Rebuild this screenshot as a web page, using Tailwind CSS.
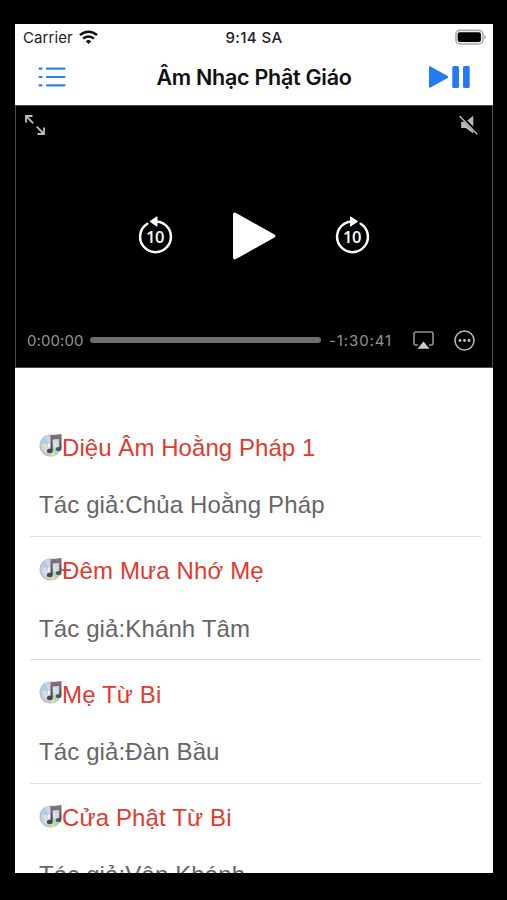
<!DOCTYPE html>
<html lang="vi">
<head>
<meta charset="utf-8">
<title>Âm Nhạc Phật Giáo</title>
<script src="https://cdn.jsdelivr.net/npm/@tailwindcss/browser@4"></script>
</head>
<body class="bg-black w-[507px] h-[900px] overflow-hidden pt-6 pl-[15px] font-['Inter',sans-serif]">
<svg class="absolute w-0 h-0">
  <defs>
    <radialGradient id="discShade"><stop offset="0" stop-color="#eef1f3"/><stop offset=".75" stop-color="#ccd6dc"/><stop offset="1" stop-color="#b2bbc1"/></radialGradient>
    <linearGradient id="noteShade" x1="0" y1="0" x2="0" y2="1"><stop offset="0" stop-color="#8b7583"/><stop offset="1" stop-color="#45414f"/></linearGradient>
    <symbol id="disc" viewBox="0 0 24 24">
      <circle cx="11.5" cy="12.5" r="11" fill="url(#discShade)"/>
      <path d="M11.5 12.5 1.1 9A11 11 0 0 1 5.5 3.3z" fill="#a9cfe6"/>
      <path d="M11.5 12.5 5.5 3.3A11 11 0 0 1 9.5 1.7z" fill="#d5d0ea"/>
      <path d="M11.5 12.5 21.5 17A11 11 0 0 1 16.5 22.3z" fill="#a5d8bd"/>
      <path d="M11.5 12.5 16.5 22.3A11 11 0 0 1 12 23.5z" fill="#dcdc9e"/>
      <circle cx="11" cy="12.5" r="3" fill="#f4f4f6" stroke="#b5bac2" stroke-width=".7"/>
      <path d="M11.5 2.2 22.5 1v14.5h-2.2V5.8l-6.6.8v11h-2.2z" fill="url(#noteShade)"/>
      <ellipse cx="10.8" cy="18" rx="2.9" ry="2.2" fill="#4b4754"/>
      <ellipse cx="19.6" cy="16" rx="2.8" ry="2.1" fill="#5a5260"/>
    </symbol>
  </defs>
</svg>
<main class="w-[478px] h-[849px] bg-white overflow-hidden flex flex-col">
  <div class="h-[26px] shrink-0 grid grid-cols-3 items-center px-2 text-[#222]">
    <div class="flex items-center gap-[6px] text-[15px] tracking-[0.1px] leading-none">
      <span>Carrier</span>
      <svg class="w-[19px] h-[14px] mt-[-1px]" viewBox="0 0 19 14" fill="none" stroke="#111" stroke-width="2.5"><path d="M1 5.2a12.2 12.2 0 0 1 17 0M4.1 8.6a7.8 7.8 0 0 1 10.8 0"/><path d="M9.5 14 6.7 11.3a4 4 0 0 1 5.6 0z" fill="#111" stroke="none"/></svg>
    </div>
    <span class="text-center text-[15px] font-medium leading-none tracking-[0.4px] whitespace-nowrap">9:14 SA</span>
    <svg class="justify-self-end w-[31px] h-[16px] mr-[-1px] mt-[-1px]" viewBox="0 0 31 16"><rect x=".9" y="1.3" width="27" height="13.6" rx="4" fill="#eee" stroke="#aaa" stroke-width="1.5"/><rect x="2.7" y="3.2" width="23.2" height="9.8" rx="2" fill="#000"/><path d="M29.3 6v4.5q1.5-.6 1.5-2.2T29.3 6" fill="#999"/></svg>
  </div>
  <header class="h-[55px] shrink-0 grid grid-cols-[1fr_auto_1fr] items-center px-[23px] pb-[1px]">
    <svg class="w-7 h-5" viewBox="0 0 28 20" stroke="#337ee8" stroke-width="2.2" stroke-linecap="round"><path d="M1.5 1.7h2M9 1.7h17.5M1.5 10h2M9 10h17.5M1.5 18.3h2M9 18.3h17.5"/></svg>
    <h1 class="text-[21.5px] font-semibold tracking-[-0.27px] text-[#111] whitespace-nowrap">Âm Nhạc Phật Giáo</h1>
    <svg class="w-[41px] h-[22px] justify-self-end" viewBox="0 0 41 22" fill="#2479f5"><path d="M0 1.2Q0-.3 1.5.4L18.7 10q1.3 1 0 2L1.5 21.6Q0 22.3 0 20.8z"/><rect x="23.3" width="6.7" height="22" rx="1.5"/><rect x="34" width="6.7" height="22" rx="1.5"/></svg>
  </header>
  <section class="h-[263px] shrink-0 bg-black border border-[#4a4a4a] flex flex-col">
    <div class="flex justify-between pl-[9px] pr-[13px] pt-[9px]">
      <svg class="w-5 h-5" viewBox="0 0 20 20" fill="none" stroke="#bdbdbd" stroke-width="1.8"><path d="M1 7.5V1h6.5M1 1l7.3 7.3M19 12.5V19h-6.5M19 19l-7.3-7.3"/></svg>
      <svg class="w-[20px] h-[20px]" viewBox="0 0 20 20"><path d="M2.2 6.8h4.5L14.3.8v17.6L6.7 13H2.2z" fill="#b8b8b8"/><path d="M.9.1 19 18.6" stroke="#000" stroke-width="3.2"/><path d="M.5 1 18.2 19.3" stroke="#b8b8b8" stroke-width="1.5"/></svg>
    </div>
    <div class="flex items-center pl-[122px] pt-[77px]">
      <svg class="w-[35px] h-[38px] mt-[-3px]" viewBox="0 0 35 38"><path d="M9.3 7.7A15.4 15.4 0 1 0 25.7 7.7" fill="none" stroke="#fff" stroke-width="2.5" stroke-linecap="round"/><path d="M17 5.5a15.5 15.5 0 0 1 8.7 2.2" fill="none" stroke="#fff" stroke-width="2.5"/><path d="M12 5.4 19 .8v9.4z" fill="#fff" stroke="#fff" stroke-linejoin="round"/><text x="17" y="27" text-anchor="middle" font-family="Open Sans" font-size="16.5" font-weight="600" letter-spacing="-.4" fill="#fff">10</text></svg>
      <svg class="w-[43px] h-12 ml-[60px]" viewBox="0 0 43 48" fill="#fff"><path d="M0 3Q0-.8 3.5 1.2L41 22.3q3 1.7 0 3.4L3.5 46.8Q0 48.8 0 45z"/></svg>
      <svg class="w-[35px] h-[38px] ml-[59px] mt-[-3px]" viewBox="0 0 35 38"><path d="M25.7 7.7A15.4 15.4 0 1 1 9.3 7.7" fill="none" stroke="#fff" stroke-width="2.5" stroke-linecap="round"/><path d="M18 5.5a15.5 15.5 0 0 0-8.7 2.2" fill="none" stroke="#fff" stroke-width="2.5"/><path d="M22.5 5.4 15.5.8v9.4z" fill="#fff" stroke="#fff" stroke-linejoin="round"/><text x="17" y="27" text-anchor="middle" font-family="Open Sans" font-size="16.5" font-weight="600" letter-spacing="-.4" fill="#fff">10</text></svg>
    </div>
    <div class="mt-auto h-[54px] flex items-center pl-[11px] text-[15px] leading-none text-[#929292]">
      <span class="w-[63px] tracking-[0.1px]">0:00:00</span>
      <div class="w-[231px] h-[6px] rounded-full bg-[#6e6e6e]"></div>
      <span class="ml-[8px] w-[84px] tracking-[0.9px]">-1:30:41</span>
      <svg class="w-[21px] h-[18px]" viewBox="0 0 21 18"><path d="M5 14H2.7Q1 14 1 12.3V2.7Q1 1 2.7 1h15.6Q20 1 20 2.7v9.6q0 1.7-1.7 1.7H16" fill="none" stroke="#929292" stroke-width="1.6"/><path d="m10.5 10.5 6 7.2h-12z" fill="#ccc"/></svg>
      <svg class="w-[21px] h-[21px] ml-[20px]" viewBox="0 0 21 21"><circle cx="10.5" cy="10.5" r="9.5" fill="none" stroke="#b5b5b5" stroke-width="1.6"/><g fill="#c4c4c4"><circle cx="6" cy="10.5" r="1.4"/><circle cx="10.5" cy="10.5" r="1.4"/><circle cx="15" cy="10.5" r="1.4"/></g></svg>
    </div>
  </section>
  <ul class="pt-[45px] pl-[15px] pr-[12px] font-['Liberation_Sans',Arial,sans-serif] text-[24px] whitespace-nowrap">
    <li class="h-[123.5px] border-b border-[#dedede] pl-[9px] pt-[20px]">
      <div class="h-[29px] flex items-center text-[#e23a2e] tracking-[0.06px]"><svg class="w-6 h-6 mt-[-5px] mr-[-1px]"><use href="#disc"/></svg><span>Diệu Âm Hoằng Pháp 1</span></div>
      <p class="mt-[28px] h-[29px] leading-[29px] tracking-[0.12px] text-[#666]">Tác giả:Chủa Hoằng Pháp</p>
    </li>
    <li class="h-[123.5px] border-b border-[#dedede] pl-[9px] pt-[20px]">
      <div class="h-[29px] flex items-center text-[#e23a2e] tracking-[0.14px]"><svg class="w-6 h-6 mt-[-5px] mr-[-1px]"><use href="#disc"/></svg><span>Đêm Mưa Nhớ Mẹ</span></div>
      <p class="mt-[28px] h-[29px] leading-[29px] tracking-[0.12px] text-[#666]">Tác giả:Khánh Tâm</p>
    </li>
    <li class="h-[123.5px] border-b border-[#dedede] pl-[9px] pt-[20px]">
      <div class="h-[29px] flex items-center text-[#e23a2e] tracking-[0.14px]"><svg class="w-6 h-6 mt-[-5px] mr-[-1px]"><use href="#disc"/></svg><span>Mẹ Từ Bi</span></div>
      <p class="mt-[28px] h-[29px] leading-[29px] tracking-[0.12px] text-[#666]">Tác giả:Đàn Bầu</p>
    </li>
    <li class="h-[123.5px] pl-[9px] pt-[20px]">
      <div class="h-[29px] flex items-center text-[#e23a2e] tracking-[0.14px]"><svg class="w-6 h-6 mt-[-5px] mr-[-1px]"><use href="#disc"/></svg><span>Cửa Phật Từ Bi</span></div>
      <p class="mt-[27px] h-[29px] leading-[29px] tracking-[0.12px] text-[#666]">Tác giả:Vân Khánh</p>
    </li>
  </ul>
</main>
</body>
</html>
